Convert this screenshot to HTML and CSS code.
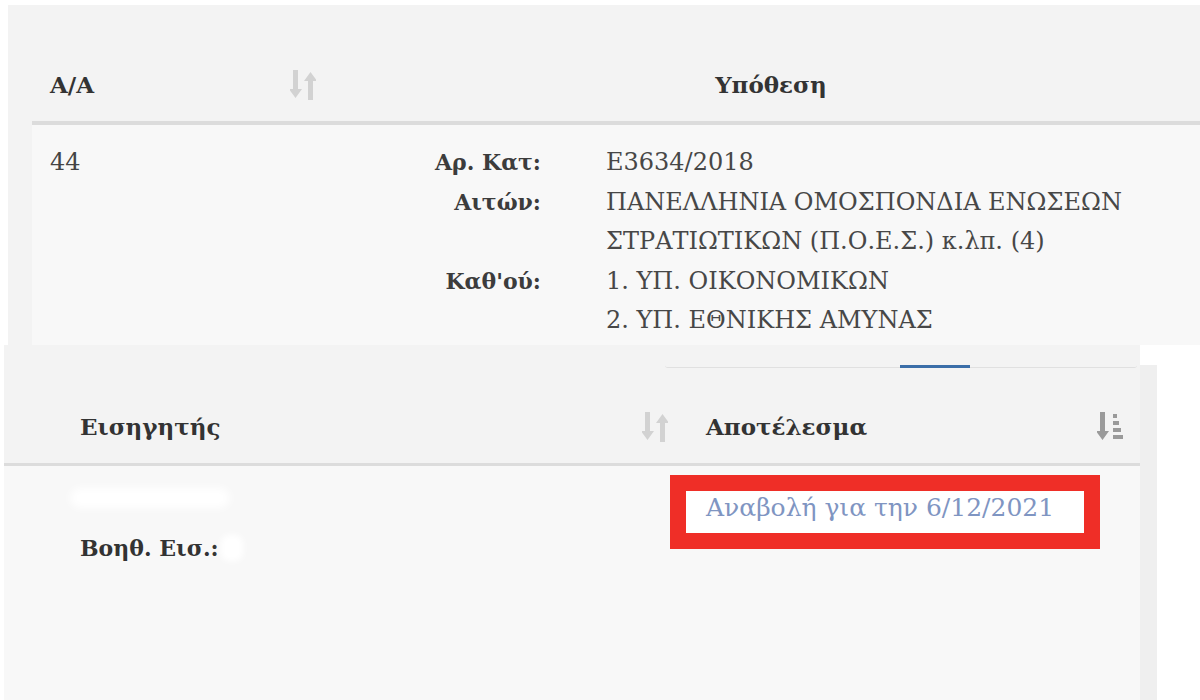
FILE: index.html
```html
<!DOCTYPE html>
<html lang="el">
<head>
<meta charset="utf-8">
<title>Υπόθεση</title>
<link rel="stylesheet" href="styles.css">
</head>
<body>
<div class="top">
  <div class="ttable">
    <div class="thead">
      <div class="th th-aa"><span>A/A</span>
        <svg class="sort" width="26" height="30" viewBox="0 0 26 30"><path d="M3 0h5v19h4l-6.5 9-6.5-9h4z"/><path d="M18 30h5V11h4L20.5 2 14 11h4z"/></svg>
      </div>
      <div class="th th-case">Υπόθεση</div>
    </div>
    <div class="trow">
      <div class="td td-aa">44</div>
      <div class="td">
        <div class="details">
          <div class="lbl">Αρ. Κατ:</div><div class="val">Ε3634/2018</div>
          <div class="lbl">Αιτών:</div><div class="val">ΠΑΝΕΛΛΗΝΙΑ ΟΜΟΣΠΟΝΔΙΑ ΕΝΩΣΕΩΝ<br>ΣΤΡΑΤΙΩΤΙΚΩΝ (Π.Ο.Ε.Σ.) κ.λπ. (4)</div>
          <div class="lbl">Καθ'ού:</div><div class="val">1. ΥΠ. ΟΙΚΟΝΟΜΙΚΩΝ<br>2. ΥΠ. ΕΘΝΙΚΗΣ ΑΜΥΝΑΣ</div>
        </div>
      </div>
    </div>
  </div>
</div>
<div class="bottom">
  <div class="bpanel">
    <div class="bhead">
      <div class="tabbar"><div class="tab-active"></div></div>
      <div class="bhrow">
        <div class="th th-rep"><span>Εισηγητής</span>
          <svg class="sort" width="26" height="30" viewBox="0 0 26 30"><path d="M3 0h5v19h4l-6.5 9-6.5-9h4z"/><path d="M18 30h5V11h4L20.5 2 14 11h4z"/></svg>
        </div>
        <div class="th th-res"><span>Αποτέλεσμα</span>
          <svg class="sort active" width="26" height="30" viewBox="0 0 26 30"><path d="M3 0h5v19h4l-6.5 9-6.5-9h4z"/><rect x="16" y="2" width="4" height="4"/><rect x="16" y="9" width="6" height="4"/><rect x="16" y="16" width="8" height="4"/><rect x="16" y="23" width="10" height="4"/></svg>
        </div>
      </div>
    </div>
    <div class="bbody">
      <div class="bcell">
        <div class="redact"></div>
        <div class="assist">Βοηθ. Εισ.:<span class="redact-sm"></span></div>
      </div>
      <div class="bcell">
        <div class="hl"><a class="link" href="#">Αναβολή για την 6/12/2021</a></div>
      </div>
    </div>
  </div>
  <div class="side"><div class="side-strip"></div></div>
</div>
</body>
</html>
```
FILE: styles.css
```css
html, body {
  margin: 0;
  padding: 0;
  background: #ffffff;
}
body {
  width: 1200px;
  height: 700px;
  overflow: hidden;
  font-family: "DejaVu Serif", "Liberation Serif", serif;
  font-size: 24px;
  color: #444444;
}
.top {
  margin: 5px 0 0 8px;
  height: 340px;
  padding-left: 24px;
  background: #f3f3f3;
  overflow: hidden;
}
.ttable {
  width: 1180px;
}
.thead {
  display: grid;
  grid-template-columns: 298px 1fr;
  align-items: start;
  height: 116px;
  box-sizing: border-box;
  padding-top: 60px;
  border-bottom: 4px solid #dcdcdc;
}
.thead {
  height: 120px;
}
.th {
  font-weight: bold;
  color: #333333;
  line-height: 40px;
  height: 40px;
  font-size: 23px;
}
.th-aa {
  display: flex;
  justify-content: space-between;
  align-items: center;
  padding-left: 18px;
  padding-right: 14px;
}
.th-case {
  text-align: center;
}
.sort {
  fill: #d2d2d2;
  display: block;
}
.sort.active {
  fill: #9a9a9a;
}
.trow {
  display: grid;
  grid-template-columns: 298px 1fr;
  background: #f8f8f8;
  padding-top: 18px;
  height: 240px;
  line-height: 39.5px;
}
.td-aa {
  padding-left: 18px;
}
.details {
  display: grid;
  grid-template-columns: 211px 1fr;
  column-gap: 65px;
}
.lbl {
  text-align: right;
  font-weight: bold;
  color: #3c3c3c;
  font-size: 22px;
}
.val {
  color: #474747;
}
.bottom {
  display: flex;
  height: 355px;
}
.bpanel {
  width: 1136px;
  margin-left: 4px;
  background: #f8f8f8;
  display: flex;
  flex-direction: column;
}
.bhead {
  background: #f3f3f3;
  height: 121px;
  box-sizing: border-box;
  padding-top: 20px;
  border-bottom: 3px solid #dcdcdc;
}
.tabbar {
  margin-left: 661px;
  width: 472px;
  height: 2px;
  border-bottom: 1px solid #e0e0e0;
  border-radius: 0 0 6px 6px;
  display: flex;
}
.tab-active {
  margin-left: 235px;
  width: 70px;
  height: 3px;
  background: #3b6ea8;
}
.bhrow {
  display: grid;
  grid-template-columns: 681px 1fr;
  margin-top: 39px;
}
.th-rep {
  display: flex;
  justify-content: space-between;
  align-items: center;
  padding-left: 76px;
  padding-right: 17px;
}
.th-res {
  display: flex;
  justify-content: space-between;
  align-items: center;
  padding-left: 21px;
  padding-right: 17px;
}
.bbody {
  flex: 1;
  display: grid;
  grid-template-columns: 666px 1fr;
  background: #f8f8f8;
}
.redact {
  margin: 22px 0 0 66px;
  width: 160px;
  height: 20px;
  background: #ffffff;
  border-radius: 10px;
  filter: blur(4px);
}
.assist {
  margin-top: 20px;
  padding-left: 76px;
  font-weight: bold;
  color: #333333;
  font-size: 22px;
  line-height: 40px;
  display: flex;
  align-items: center;
}
.redact-sm {
  display: inline-block;
  width: 22px;
  height: 26px;
  margin-left: 2px;
  background: #ffffff;
  border-radius: 8px;
  filter: blur(3px);
}
.hl {
  margin-top: 9px;
  width: 430px;
  height: 74px;
  box-sizing: border-box;
  border: 16px solid #ef2e27;
  background: #ffffff;
  padding-left: 20px;
}
.link {
  display: block;
  color: #7f95c2;
  text-decoration: none;
  line-height: 34px;
  font-size: 25px;
  white-space: nowrap;
}
.side {
  flex: 1;
  padding-top: 20px;
  background: #ffffff;
}
.side-strip {
  width: 17px;
  height: 100%;
  background: #efefef;
}
```
